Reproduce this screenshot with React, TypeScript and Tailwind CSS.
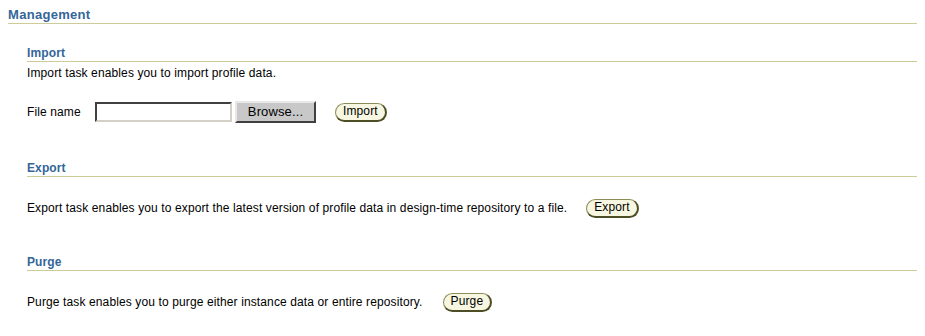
import React from "react";

function OraButton({ label }: { label: string }) {
  return (
    <button
      type="button"
      className="h-[19px] px-[7px] rounded-full border border-[#8c8c5a] border-b-[2px] border-r-[2px] border-b-[#4d4d26] border-r-[#4d4d26] bg-[#f7f7e1] text-[12px] leading-[15px] text-black"
    >
      {label}
    </button>
  );
}

function SubHeader({ title }: { title: string }) {
  return (
    <div className="border-b border-[#cccc99] h-[17px] leading-[16px] text-[12px] font-bold text-[#336699]">
      {title}
    </div>
  );
}

export default function App() {
  return (
    <div
      className="w-[925px] h-[336px] bg-white text-black text-[12px] tracking-[0.12px] overflow-hidden"
      style={{ fontFamily: '"Liberation Sans", Arial, sans-serif' }}
    >
      <div className="pl-[8px] pr-[8px] pt-[6px]">
        <div className="border-b border-[#cccc99] h-[18px] leading-[17px] text-[13px] font-bold tracking-[0.3px] text-[#336699]">
          Management
        </div>
        <div className="pl-[19px]">
          <div className="mt-[21px]">
            <SubHeader title="Import" />
            <div className="mt-[4px] leading-[14px]">Import task enables you to import profile data.</div>
            <div className="mt-[21px] flex items-center h-[22px]">
              <span className="w-[68px]">File name</span>
              <input
                type="text"
                className="w-[137px] h-[20px] border-2 border-t-[#404040] border-l-[#404040] border-b-[#d4d0c8] border-r-[#d4d0c8] bg-white outline-none"
              />
              <button
                type="button"
                className="ml-[3px] w-[81px] h-[22px] bg-[#c8c8c8] border-2 border-t-[#e8e8e8] border-l-[#e8e8e8] border-b-[#404040] border-r-[#404040] text-[13px] leading-[16px] text-black"
              >
                Browse...
              </button>
              <span className="ml-[19px]">
                <OraButton label="Import" />
              </span>
            </div>
          </div>
          <div className="mt-[37px]">
            <SubHeader title="Export" />
            <div className="mt-[21px] flex items-center h-[20px]">
              <span>
                Export task enables you to export the latest version of profile data in design-time repository to a file.
              </span>
              <span className="ml-[19px]">
                <OraButton label="Export" />
              </span>
            </div>
          </div>
          <div className="mt-[36px]">
            <SubHeader title="Purge" />
            <div className="mt-[21px] flex items-center h-[20px]">
              <span>
                Purge task enables you to purge either instance data or entire repository.
              </span>
              <span className="ml-[20px]">
                <OraButton label="Purge" />
              </span>
            </div>
          </div>
        </div>
      </div>
    </div>
  );
}
